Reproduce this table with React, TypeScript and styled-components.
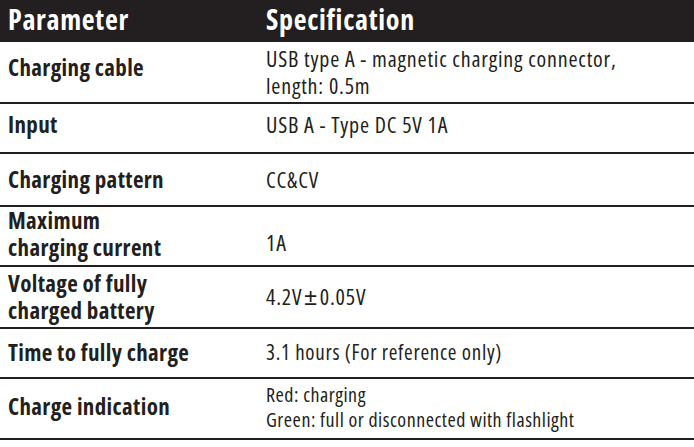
import React from "react";
import styled, { createGlobalStyle } from "styled-components";

const Global = createGlobalStyle`
  html, body { margin: 0; padding: 0; background: #ffffff; }
  body { font-family: "Open Sans", "Liberation Sans", sans-serif; color: #231f20; }
`;

const Table = styled.div`
  width: 694px;
  display: flex;
  flex-direction: column;
`;

const HeaderRow = styled.div`
  display: grid;
  grid-template-columns: 258px 1fr;
  height: 42px;
  align-items: start;
  background: #231f20;
  color: #ffffff;
  font-family: "Open Sans", sans-serif;
  font-stretch: 75%;
  font-weight: 700;
  font-size: 28px;
  letter-spacing: 0.7px;
`;

const HeaderCell = styled.div`
  padding-left: 8px;
  line-height: 38px;
`;

const Row = styled.div<{ $h: number; $raise?: number }>`
  display: grid;
  grid-template-columns: 258px 1fr;
  height: ${(p) => p.$h}px;
  align-items: center;
  padding-bottom: ${(p) => (p.$raise ?? 0) * 2}px;
  border-bottom: 2px solid #231f20;
  box-sizing: border-box;
`;

const Label = styled.div<{ $raise?: number }>`
  padding-left: 8px;
  padding-bottom: ${(p) => (p.$raise ?? 0) * 2}px;
  font-family: "Open Sans", sans-serif;
  font-stretch: 75%;
  font-weight: 700;
  font-size: 23px;
  line-height: 27px;
  letter-spacing: 0.35px;
`;

type Size = "normal" | "mid" | "small";

const sizes: Record<Size, { fs: number; ls: number; lh: number }> = {
  normal: { fs: 22, ls: 0.8, lh: 27 },
  mid: { fs: 21, ls: 0.7, lh: 27 },
  small: { fs: 20, ls: 0.5, lh: 25 },
};

const Value = styled.div<{ $size: Size }>`
  padding-left: 8px;
  font-family: "Open Sans", sans-serif;
  font-weight: 400;
  font-stretch: 75%;
  font-size: ${(p) => sizes[p.$size].fs}px;
  line-height: ${(p) => sizes[p.$size].lh}px;
  letter-spacing: ${(p) => sizes[p.$size].ls}px;
`;

const Pm = styled.span`
  font-family: "Liberation Sans", sans-serif;
  font-size: 1.05em;
  margin: 0 2px;
`;

type Item = {
  label: React.ReactNode;
  value: React.ReactNode;
  h: number;
  size?: Size;
  raise?: number;
  labelRaise?: number;
};

const rows: Item[] = [
  {
    label: "Charging cable",
    value: (
      <>
        USB type A - magnetic charging connector,
        <br />
        length: 0.5m
      </>
    ),
    h: 62,
    labelRaise: 5,
  },
  { label: "Input", value: "USB A - Type DC 5V 1A", h: 50, raise: 4 },
  { label: "Charging pattern", value: "CC&CV", h: 53 },
  {
    label: (
      <>
        Maximum
        <br />
        charging current
      </>
    ),
    value: "1A",
    h: 60,
    labelRaise: 8,
  },
  {
    label: (
      <>
        Voltage of fully
        <br />
        charged battery
      </>
    ),
    value: (
      <>
        4.2V<Pm>±</Pm>0.05V
      </>
    ),
    h: 62,
  },
  { label: "Time to fully charge", value: "3.1 hours (For reference only)", h: 50, size: "mid", raise: 1 },
  {
    label: "Charge indication",
    value: (
      <>
        Red: charging
        <br />
        Green: full or disconnected with flashlight
      </>
    ),
    h: 61,
    size: "small",
    raise: 2,
  },
];

export default function App() {
  return (
    <>
      <Global />
      <Table>
        <HeaderRow>
          <HeaderCell>Parameter</HeaderCell>
          <HeaderCell>Specification</HeaderCell>
        </HeaderRow>
        {rows.map((r, i) => (
          <Row key={i} $h={r.h} $raise={r.raise}>
            <Label $raise={r.labelRaise}>{r.label}</Label>
            <Value $size={r.size ?? "normal"}>{r.value}</Value>
          </Row>
        ))}
      </Table>
    </>
  );
}
